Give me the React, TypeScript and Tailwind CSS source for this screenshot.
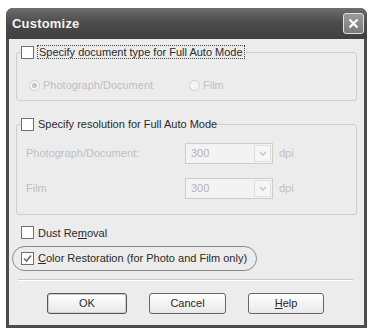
import React from "react";

const font = { fontFamily: '"Liberation Sans", Arial, sans-serif' };

function Check({ checked = false }: { checked?: boolean }) {
  return (
    <span className="inline-flex w-[13px] h-[13px] shrink-0 items-center justify-center border border-[#6f6f6f] bg-white">
      {checked && (
        <svg width="9" height="9" viewBox="0 0 9 9">
          <path d="M1 4.5 L3.5 7 L8 1.5" fill="none" stroke="#6a6a6a" strokeWidth="1.6" />
        </svg>
      )}
    </span>
  );
}

function Radio({ checked = false }: { checked?: boolean }) {
  return (
    <span className="inline-flex w-[11px] h-[11px] shrink-0 items-center justify-center rounded-full border border-[#cfcfcf] bg-[#f4f4f4]">
      {checked && <span className="w-[5px] h-[5px] rounded-full bg-[#c4c4c4]" />}
    </span>
  );
}

function Select() {
  return (
    <div className="flex w-[88px] h-[21px] border border-[#cdcdcd] bg-[#f3f3f3] p-[1px]">
      <span className="flex-1 pl-[4px] text-[11px] leading-[17px] text-[#b5b5b5]">300</span>
      <span className="flex w-[17px] items-center justify-center border border-[#e0e0e0] bg-[#f6f6f6]">
        <svg width="8" height="5" viewBox="0 0 8 5">
          <path d="M1 1 L4 4 L7 1" fill="none" stroke="#c4c4c4" strokeWidth="1.5" />
        </svg>
      </span>
    </div>
  );
}

export default function App() {
  return (
    <div className="w-[373px] h-[328px] bg-white overflow-hidden pt-[8px] pl-[6px]" style={font}>
      <div className="flex h-[320px] w-[361px] flex-col rounded-t-[7px] bg-[#4b4b4b] px-[3px] pb-[3px]">
        {/* title bar */}
        <div className="flex h-[31px] items-center justify-between rounded-t-[7px] bg-gradient-to-b from-[#6e6e6e] via-[#4a4a4a] to-[#404040] -mx-[3px] pl-[6px] pr-[3px]">
          <span className="text-[13px] font-bold text-[#f2f2f2] tracking-[0.2px]">Customize</span>
          <span className="flex h-[21px] w-[21px] items-center justify-center rounded-[3px] border border-[#e0e0e0] bg-gradient-to-b from-[#9a9a9a] to-[#7a7a7a]">
            <svg width="11" height="11" viewBox="0 0 11 11">
              <path d="M1.5 1.5 L9.5 9.5 M9.5 1.5 L1.5 9.5" stroke="#ffffff" strokeWidth="2.2" />
            </svg>
          </span>
        </div>
        {/* body */}
        <div className="flex flex-1 flex-col bg-[#ececec] px-[7px] pt-[6px] text-[11px] text-[#2a2a2a]">
          <fieldset className="rounded-[3px] border border-[#cdcdcd] pb-[6px]">
            <legend className="ml-[4px] flex items-center gap-[3px] pr-[1px]">
              <Check />
              <span className="border border-dotted border-[#444] px-[1px] leading-[12px]">Specify document type for Full Auto Mode</span>
            </legend>
            <div className="flex items-center pl-[12px] pt-[18px] text-[#bfbfbf]">
              <div className="flex w-[160px] items-center gap-[3px]">
                <Radio checked />
                <span>Photograph/Document</span>
              </div>
              <div className="flex items-center gap-[3px]">
                <Radio />
                <span>Film</span>
              </div>
            </div>
          </fieldset>

          <fieldset className="mt-[17px] rounded-[3px] border border-[#cdcdcd] pb-[15px]">
            <legend className="ml-[4px] flex items-center gap-[4px] pr-[1px]">
              <Check />
              <span className="leading-[13px]">Specify resolution for Full Auto Mode</span>
            </legend>
            <div className="flex flex-col gap-[14px] pt-[12px] pl-[9px] text-[#bfbfbf]">
              <div className="flex items-center">
                <span className="w-[159px]">Photograph/Document:</span>
                <Select />
                <span className="ml-[6px]">dpi</span>
              </div>
              <div className="flex items-center">
                <span className="w-[159px]">Film</span>
                <Select />
                <span className="ml-[6px]">dpi</span>
              </div>
            </div>
          </fieldset>

          <div className="mt-[10px] flex items-center gap-[4px] pl-[5px]">
            <Check />
            <span>Dust Re<u>m</u>oval</span>
          </div>

          <div className="mt-[5px] flex h-[25px] w-[245px] items-center gap-[4px] rounded-full border border-[#8a8a8a] pl-[8px] -ml-[4px]">
            <Check checked />
            <span><u>C</u>olor Restoration (for Photo and Film only)</span>
          </div>

          <div className="mt-[8px] ml-[2px] mr-[4px] h-[2px] border-t border-[#c6c6c6] border-b border-b-white" />

          <div className="mt-[12px] flex gap-[22px] pl-[31px]">
            <div className="flex h-[21px] w-[80px] items-center justify-center rounded-[3px] border border-[#555] bg-gradient-to-b from-white to-[#e8e8e8] shadow-[inset_0_0_0_1px_#d0d0d0]">OK</div>
            <div className="flex h-[21px] w-[77px] items-center justify-center rounded-[3px] border border-[#666] bg-gradient-to-b from-white to-[#e8e8e8]">Cancel</div>
            <div className="flex h-[21px] w-[76px] items-center justify-center rounded-[3px] border border-[#666] bg-gradient-to-b from-white to-[#e8e8e8]"><span><u>H</u>elp</span></div>
          </div>
        </div>
      </div>
    </div>
  );
}
